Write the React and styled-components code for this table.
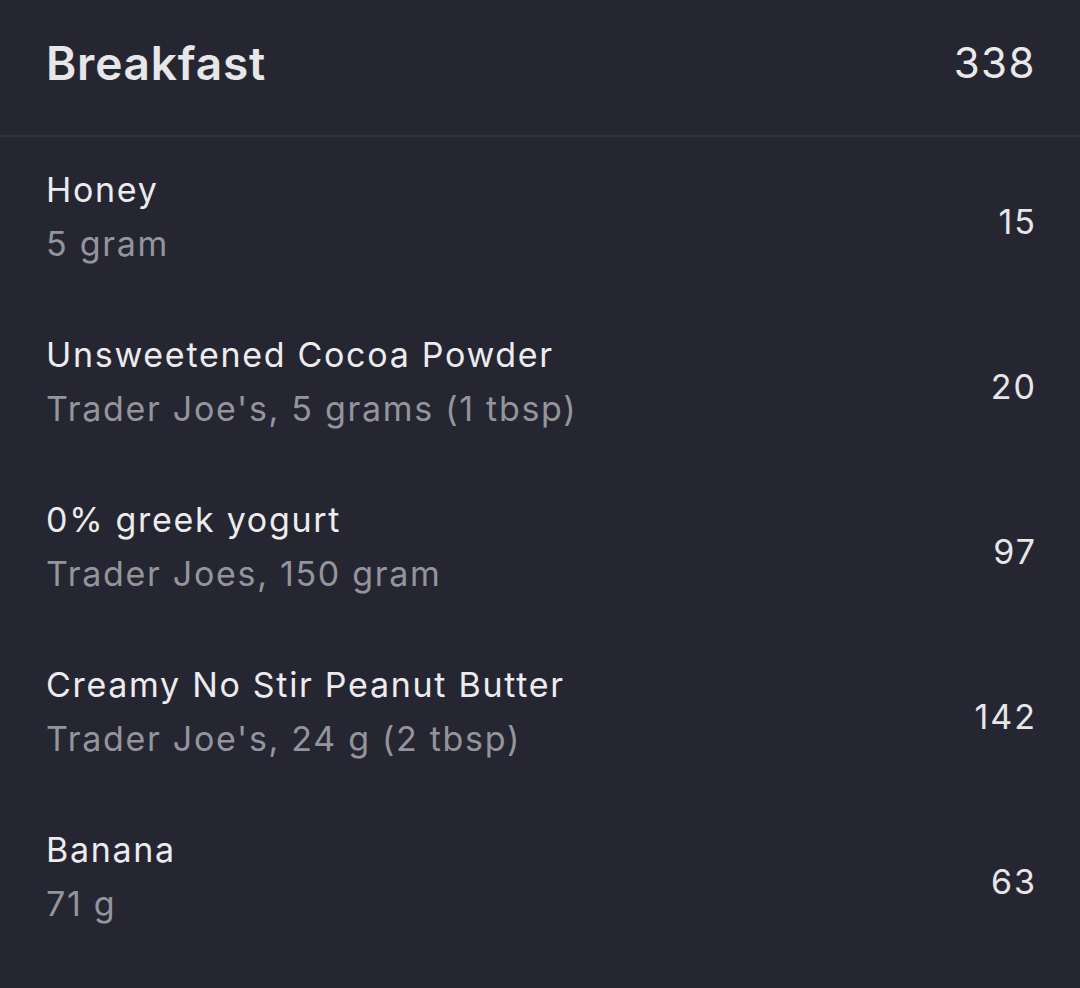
import React from 'react';
import styled, { createGlobalStyle } from 'styled-components';

const GlobalStyle = createGlobalStyle`
    html, body {
        margin: 0;
        padding: 0;
        background: #252631;
    }
    body {
        font-family: Inter, "Noto Sans", sans-serif;
        -webkit-font-smoothing: antialiased;
    }
`;

const Page = styled.div`
    width: 1080px;
    min-height: 988px;
    background: #252631;
    color: #e9e9ec;
`;

const Header = styled.div`
    height: 137px;
    box-sizing: border-box;
    padding: 0 44px 10px 46px;
    display: flex;
    align-items: center;
    justify-content: space-between;
    border-bottom: 2px solid #31323d;
`;

const Title = styled.h1`
    margin: 0;
    font-size: 46px;
    font-weight: 600;
    letter-spacing: 0.8px;
    color: #e7e7ea;
`;

const Total = styled.span`
    font-size: 42px;
    font-weight: 400;
    letter-spacing: 1.5px;
`;

const List = styled.div`
    display: flex;
    flex-direction: column;
`;

const Row = styled.div`
    height: 165px;
    box-sizing: border-box;
    padding: 0 43px 0 46px;
    display: flex;
    align-items: center;
    justify-content: space-between;
`;

const Info = styled.div`
    display: flex;
    flex-direction: column;
    gap: 14px;
    margin-top: -6px;
`;

const Text = styled.div`
    font-size: 34px;
    line-height: 40px;
    letter-spacing: 1.7px;
    white-space: nowrap;
    color: ${p => p.$muted ? '#94959c' : '#ececef'};
`;

const Calories = styled.div`
    font-size: 34px;
    letter-spacing: 2px;
    color: #e6e6e9;
    padding-top: 4px;
`;

const foods = [
    { name: 'Honey', detail: '5 gram', kcal: 15 },
    { name: 'Unsweetened Cocoa Powder', detail: "Trader Joe's, 5 grams (1 tbsp)", kcal: 20 },
    { name: '0% greek yogurt', detail: 'Trader Joes, 150 gram', kcal: 97 },
    { name: 'Creamy No Stir Peanut Butter', detail: "Trader Joe's, 24 g (2 tbsp)", kcal: 142 },
    { name: 'Banana', detail: '71 g', kcal: 63 },
];

export default function App() {
    const total = foods.reduce((sum, f) => sum + f.kcal, 0) + 1;
    return <Page>
        <GlobalStyle />
        <Header>
            <Title>Breakfast</Title>
            <Total>{total}</Total>
        </Header>
        <List>
            {foods.map(f => <Row key={f.name}>
                <Info>
                    <Text>{f.name}</Text>
                    <Text $muted>{f.detail}</Text>
                </Info>
                <Calories>{f.kcal}</Calories>
            </Row>)}
        </List>
    </Page>;
}
